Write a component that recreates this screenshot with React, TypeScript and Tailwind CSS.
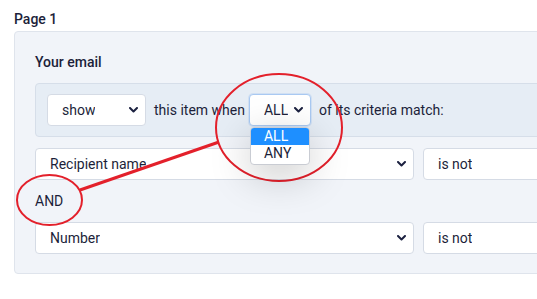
function Chevron() {
  return (
    <svg width="9" height="6" viewBox="0 0 9 6" className="shrink-0">
      <path d="M1 1l3.5 3.5L8 1" fill="none" stroke="#1c2140" strokeWidth="2" strokeLinecap="round" strokeLinejoin="round" />
    </svg>
  );
}

function Select({ label, className, focused }: { label: string; className: string; focused?: boolean }) {
  return (
    <div
      className={
        "flex h-[32px] items-center justify-between rounded-[4px] border bg-white pl-[14px] pr-[7px] " +
        (focused ? "border-[#a9c9f2] shadow-[0_0_0_1px_rgba(169,201,242,0.35)] " : "border-[#d5dbe5] ") +
        className
      }
    >
      <span className="truncate">{label}</span>
      <Chevron />
    </div>
  );
}

export default function App() {
  return (
    <div className="relative h-[299px] w-[537px] overflow-hidden bg-white font-['Roboto',sans-serif] text-[14px] leading-[20px] text-[#1c1f3a]">
      <div className="pl-[14px] pt-[9px]">
        <div className="font-medium">Page 1</div>
        <div className="mt-[2px] w-[600px] rounded-[4px] border border-[#dfe4ec] bg-[#f1f4f9] pb-[19px] pl-[20px] pt-[20px]">
          <div className="font-medium">Your email</div>
          <div className="mt-[11px] flex items-center gap-[8px] rounded-l-[4px] border border-[#d6dee9] bg-[#e6edf5] py-[10px] pl-[11px]">
            <Select label="show" className="w-[99px]" />
            <span>this item when</span>
            <div className="relative -ml-[4px]">
              <Select label="ALL" className="w-[62px]" focused />
              <div className="absolute left-[1px] top-[33px] z-10 w-[60px] overflow-hidden rounded-[4px] border border-[#c9ccd3] bg-white pb-[2px] shadow-[0_10px_40px_rgba(0,0,0,0.22)]">
                <div className="h-[17px] bg-[#1e8fff] pl-[13px] leading-[17px] text-white">ALL</div>
                <div className="h-[17px] pl-[13px] leading-[17px]">ANY</div>
              </div>
            </div>
            <span>of its criteria match:</span>
          </div>
          <div className="mt-[11px] grid grid-cols-[379px_200px] gap-x-[9px]">
            <Select label="Recipient name" className="" />
            <Select label="is not" className="" />
          </div>
          <div className="flex h-[42px] items-center">AND</div>
          <div className="grid grid-cols-[379px_200px] gap-x-[9px]">
            <Select label="Number" className="" />
            <Select label="is not" className="" />
          </div>
        </div>
      </div>
      <svg className="pointer-events-none absolute left-0 top-0" width="537" height="299">
        <ellipse cx="279" cy="127.5" rx="63" ry="53.5" fill="none" stroke="#e3202b" strokeWidth="2" />
        <ellipse cx="49.5" cy="200" rx="32.5" ry="25" fill="none" stroke="#e3202b" strokeWidth="2" />
        <line x1="80" y1="190" x2="219" y2="142" stroke="#e3202b" strokeWidth="3" />
      </svg>
    </div>
  );
}
